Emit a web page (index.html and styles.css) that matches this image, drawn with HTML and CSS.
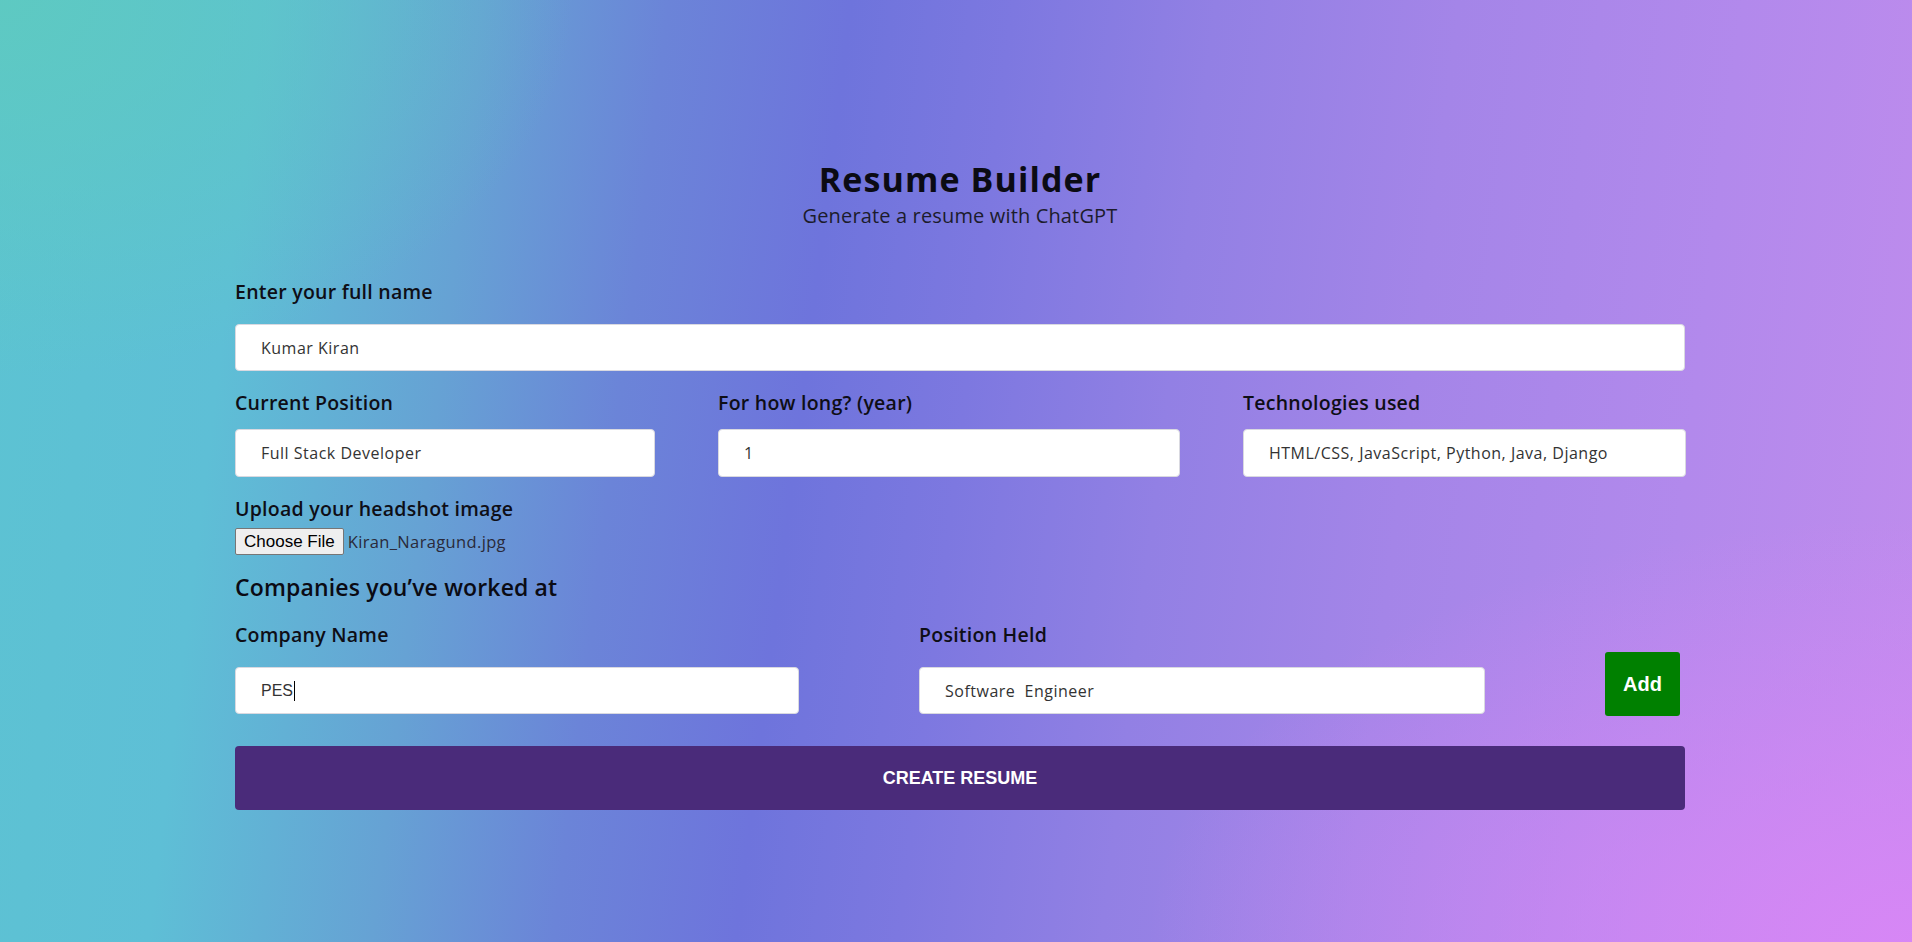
FILE: index.html
```html
<!DOCTYPE html>
<html lang="en">
<head>
<meta charset="utf-8">
<title>Resume Builder</title>
<link rel="stylesheet" href="styles.css">
</head>
<body>
<main class="app">
  <header class="header">
    <h1 class="title">Resume Builder</h1>
    <p class="subtitle">Generate a resume with ChatGPT</p>
  </header>
  <form class="form">
    <div class="field field-name">
      <label class="label label-name" for="fullName">Enter your full name</label>
      <input class="input" id="fullName" type="text" value="Kumar Kiran">
    </div>
    <div class="row-three">
      <div class="field">
        <label class="label label-row" for="position">Current Position</label>
        <input class="input input-row" id="position" type="text" value="Full Stack Developer">
      </div>
      <div class="field">
        <label class="label label-row" for="years">For how long? (year)</label>
        <input class="input input-row" id="years" type="text" value="1">
      </div>
      <div class="field">
        <label class="label label-row" for="tech">Technologies used</label>
        <input class="input input-row" id="tech" type="text" value="HTML/CSS, JavaScript, Python, Java, Django">
      </div>
    </div>
    <div class="field field-upload">
      <span class="label label-upload">Upload your headshot image</span>
      <div class="file-row">
        <span class="file-btn">Choose File</span>
        <span class="file-name">Kiran_Naragund.jpg</span>
      </div>
    </div>
    <h3 class="section-title">Companies you’ve worked at</h3>
    <div class="row-company">
      <div class="field">
        <label class="label label-company" for="company">Company Name</label>
        <div class="input input-company"><span class="typed">PES</span><span class="caret"></span></div>
      </div>
      <div class="field">
        <label class="label label-company" for="held">Position Held</label>
        <input class="input input-company" id="held" type="text" value="Software  Engineer">
      </div>
      <button type="button" class="add-btn">Add</button>
    </div>
    <button type="button" class="create-btn">CREATE RESUME</button>
  </form>
</main>
</body>
</html>
```

FILE: styles.css
```css
* {
  box-sizing: border-box;
}

html, body {
  margin: 0;
  padding: 0;
}

body {
  min-height: 942px;
  font-family: "Open Sans", "Inter", sans-serif;
  color: #111;
  background:
    radial-gradient(ellipse 40% 45% at 100% 100%, rgba(216, 134, 246, 0.95), rgba(216, 134, 246, 0) 100%),
    radial-gradient(ellipse 30% 40% at 0% 0%, rgba(94, 202, 192, 0.9), rgba(94, 202, 192, 0) 100%),
    linear-gradient(97deg, #5cc3d2 0%, #5ebfd6 13%, #66a2d4 24%, #6b84d8 33%, #6e74dc 42%, #7d78e0 50%, #9280e4 60%, #a485e8 72%, #b289ec 86%, #c08ced 100%);
}

.app {
  width: 1458px;
  margin: 0 auto;
  padding: 159px 0 0 8px;
}

.header {
  text-align: center;
}

.title {
  margin: 0;
  font-size: 34px;
  line-height: 40px;
  font-weight: 700;
  letter-spacing: 1.1px;
  color: #0b0b14;
}

.subtitle {
  margin: 5px 0 0;
  font-size: 20px;
  line-height: 24px;
  font-weight: 400;
  letter-spacing: 0.15px;
  color: #1c1c2c;
}

.form {
  margin-top: 52px;
  display: flex;
  flex-direction: column;
}

.field {
  display: flex;
  flex-direction: column;
}

.label {
  font-size: 19.5px;
  line-height: 24px;
  font-weight: 600;
  letter-spacing: 0.25px;
  color: #0e0e16;
}

.label-name {
  margin-bottom: 20px;
}

.label-row {
  margin-bottom: 14px;
}

.label-upload {
  margin-bottom: 7px;
}

.label-company {
  margin-bottom: 20px;
}

.input {
  height: 47px;
  padding: 0 24px 0 25px;
  border: 1px solid #d9d9e0;
  border-radius: 4px;
  background: #fff;
  font-family: "Open Sans", "Inter", sans-serif;
  font-size: 16px;
  letter-spacing: 0.5px;
  color: #333;
  outline: none;
  display: flex;
  align-items: center;
}

.input-row {
  height: 48px;
}

.row-three {
  margin-top: 20px;
  display: grid;
  grid-template-columns: 420px 462px 443px;
  column-gap: 63px;
}

.field-upload {
  margin-top: 20px;
}

.file-row {
  display: flex;
  align-items: center;
  gap: 4px;
}

.file-btn {
  height: 27px;
  padding: 0 8px;
  display: inline-flex;
  align-items: center;
  font-family: "Liberation Sans", Arial, sans-serif;
  font-size: 17px;
  color: #000;
  background: #efefef;
  border: 1px solid #767676;
  border-radius: 2px;
}

.file-name {
  font-size: 16.5px;
  letter-spacing: 0.35px;
  color: #2a2a3a;
}

.section-title {
  margin: 18px 0 0;
  font-size: 23px;
  line-height: 28px;
  font-weight: 600;
  letter-spacing: 0.15px;
  color: #0b0b14;
}

.row-company {
  margin-top: 22px;
  display: grid;
  grid-template-columns: 564px 566px 75px;
  column-gap: 120px;
  align-items: end;
}

.typed {
  font-family: "Liberation Sans", Arial, sans-serif;
  font-size: 16px;
  letter-spacing: 0;
  color: #333;
}

.caret {
  display: inline-block;
  width: 1px;
  height: 20px;
  background: #000;
  margin-left: 1px;
}

.add-btn {
  height: 64px;
  margin-bottom: -2px;
  border: none;
  border-radius: 3px;
  background: #008000;
  color: #fff;
  font-family: "Liberation Sans", Arial, sans-serif;
  font-size: 20px;
  font-weight: 700;
  cursor: pointer;
}

.create-btn {
  margin-top: 32px;
  height: 64px;
  border: none;
  border-radius: 4px;
  background: #4a2b7a;
  color: #fff;
  font-family: "Liberation Sans", Arial, sans-serif;
  font-size: 18px;
  font-weight: 700;
  cursor: pointer;
}
```
